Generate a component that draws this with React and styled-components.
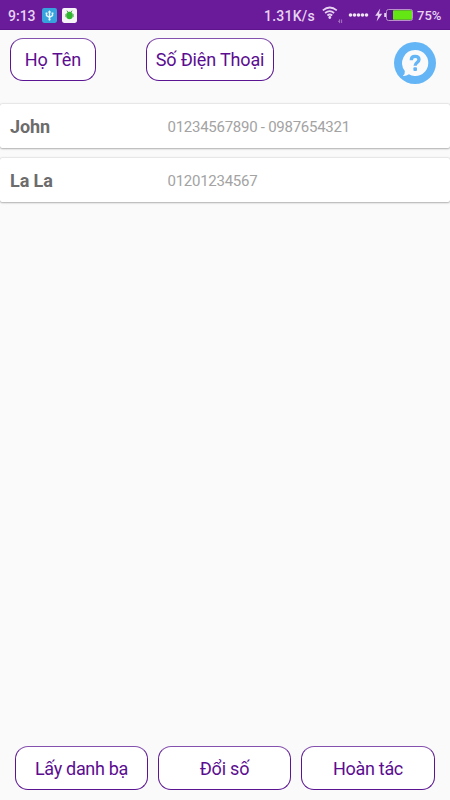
import React from "react";
import styled, { createGlobalStyle } from "styled-components";

const GlobalStyle = createGlobalStyle`
  * { box-sizing: border-box; }
  body {
    margin: 0;
    background: #fafafa;
    font-family: Roboto, "Noto Sans", sans-serif;
  }
`;

const Screen = styled.div`
  width: 450px;
  height: 800px;
  display: flex;
  flex-direction: column;
  background: #fafafa;
  overflow: hidden;
`;

const StatusBar = styled.header`
  height: 30px;
  flex: none;
  display: flex;
  align-items: center;
  padding: 1px 8px 0;
  background: #6a1b9a;
  border-bottom: 1px solid #5d148c;
  color: #e6d3f0;
  font-size: 14px;
  font-weight: 500;
  line-height: 28px;

  svg { flex: none; display: block; }
`;

const Clock = styled.span`
  width: 34px;
  padding-top: 1px;
  white-space: nowrap;
`;

const Notifications = styled.div`
  display: flex;
  gap: 5px;
`;

const Speed = styled.span`
  margin-left: auto;
  margin-right: 7px;
  padding-top: 1px;
  letter-spacing: 0.25px;
`;

const Percent = styled.span`
  width: 25px;
  margin-left: 3px;
  padding-top: 1px;
  font-size: 13px;
  white-space: nowrap;
`;

const Header = styled.nav`
  height: 73px;
  flex: none;
  display: flex;
  align-items: flex-start;
  padding: 8px 14px 0 10px;
`;

const OutlineButton = styled.button`
  width: ${(p) => p.$width}px;
  height: 43px;
  flex: none;
  margin: 0 ${(p) => p.$after || 0}px 0 0;
  padding: 1px 0 0;
  border: 1px solid #5b1593;
  border-top-color: #8452ae;
  border-radius: 13px;
  background: #fff;
  color: #5b0d91;
  font: 400 18px/24px Roboto, "Noto Sans", sans-serif;
  letter-spacing: ${(p) => p.$spacing || 0}px;
  white-space: nowrap;
`;

const ActionButton = styled(OutlineButton)`
  height: 44px;
  padding-top: 2px;
`;

const HelpButton = styled.button`
  width: 42px;
  height: 42px;
  margin: 4px 0 0 auto;
  padding: 0;
  border: 0;
  background: none;

  svg { display: block; }
`;

const ContactList = styled.main`
  flex: 1;
  display: flex;
  flex-direction: column;
  gap: 10px;
  padding-top: 1px;
`;

const ContactCard = styled.article`
  height: 44px;
  display: grid;
  grid-template-columns: 157.5px 1fr;
  align-items: center;
  padding: 1px 10px 0;
  border-radius: 2px;
  background: #fff;
  box-shadow: 0 1px 2px rgba(0, 0, 0, 0.24), 0 0 2px rgba(0, 0, 0, 0.24);
`;

const Name = styled.strong`
  color: #6c6c6c;
  font-size: 18px;
  font-weight: 700;
  line-height: 24px;
  letter-spacing: -0.1px;
`;

const Phone = styled.span`
  color: #a3a3a3;
  font-size: 15px;
  line-height: 20px;
  letter-spacing: -0.26px;
  padding-top: 1px;
`;

const Actions = styled.footer`
  flex: none;
  display: flex;
  gap: 10px;
  padding: 0 15px 10px;
`;

const contacts = [
  { name: "John", phone: "01234567890 - 0987654321" },
  { name: "La La", phone: "01201234567" },
];

const UsbIcon = () => (
  <svg width="15" height="15" viewBox="0 0 14 14">
    <rect width="14" height="14" rx="2" fill="#37a3dc" />
    <path d="M7 3v8M4.2 5v2.1L7 8.8l2.8-1.7V5" fill="none" stroke="#e8f7ff" strokeWidth="1.3" />
    <path d="M5.4 4.2 7 2.2l1.6 2zM3.4 4.2h1.6v1.5H3.4zM9 4.2h1.6v1.5H9z" fill="#e8f7ff" />
    <circle cx="7" cy="10.8" r="1" fill="#e8f7ff" />
  </svg>
);

const BugIcon = () => (
  <svg width="15" height="15" viewBox="0 0 14 14">
    <rect width="14" height="14" rx="2" fill="#f7f4f8" />
    <path d="m4.6 2.5 1 1.6h2.8l1-1.6" fill="none" stroke="#52914d" strokeWidth=".9" />
    <ellipse cx="7" cy="7" rx="3.1" ry="3.5" fill="#2eb62c" />
    <path d="M3.5 5.5v3M10.5 5.5v3" stroke="#709b6d" strokeWidth=".8" />
  </svg>
);

const WifiIcon = () => (
  <svg width="26" height="20" viewBox="0 0 26 20">
    <g fill="none" stroke="#e6d3f0" strokeWidth="1.7">
      <path d="M.8 5.3q7-5.6 14 0M3.1 8q4.7-3.8 9 0M5.4 10.5q2.4-2 4.8 0" />
    </g>
    <circle cx="7.8" cy="12.5" r="1.4" fill="#e6d3f0" />
    <path d="M16 16.3h2M17.6 14.3v3.8M19.6 14.5v3.5" fill="none" stroke="#a674c1" strokeWidth="1" />
  </svg>
);

const SignalDots = () => (
  <svg width="26" height="6" viewBox="0 0 26 6">
    <g fill="#f0e4f6">
      {[2, 6, 10, 14, 18].map((x) => (
        <circle key={x} cx={x + 0.5} cy="3" r="1.8" />
      ))}
    </g>
  </svg>
);

const BatteryIcon = () => (
  <svg width="40" height="16" viewBox="0 0 40 16">
    <path d="M6.2 1.5 1.2 8.8h2.9L2.6 14.5l5.6-7.7H5z" fill="#e6d3f0" />
    <rect x="10.2" y="6" width="1.9" height="4" rx=".5" fill="#e6d3f0" />
    <rect x="12.5" y="2.5" width="26" height="11" rx="2" fill="#5b168b" stroke="#ba91cd" />
    <rect x="19" y="3.2" width="19" height="9.6" rx=".8" fill="#64e514" />
  </svg>
);

const HelpIcon = () => (
  <svg width="42" height="42" viewBox="0 0 42 42">
    <circle cx="21" cy="21" r="21" fill="#64b5f6" />
    <path
      d="M21.3 8a13 13 0 1 1-6.4 24.3Q12 34.4 8.8 34q2.5-2.3 2-5.1A13 13 0 0 1 21.3 8Z"
      fill="#fafafa"
    />
    <path
      d="M17.3 18.2c0-2.8 1.5-3.8 3.7-3.8 2.4 0 4 1.2 4 3.1 0 3-3.9 2.9-3.9 6.2"
      fill="none"
      stroke="#64b5f6"
      strokeWidth="3.3"
    />
    <rect x="19.4" y="25.3" width="3.6" height="3.6" rx="1" fill="#64b5f6" />
  </svg>
);

export default function App() {
  return (
    <>
      <GlobalStyle />
      <Screen>
        <StatusBar>
          <Clock>9:13</Clock>
          <Notifications>
            <UsbIcon />
            <BugIcon />
          </Notifications>
          <Speed>1.31K/s</Speed>
          <WifiIcon />
          <SignalDots />
          <BatteryIcon />
          <Percent>75%</Percent>
        </StatusBar>
        <Header>
          <OutlineButton $width={86} $after={50}>Họ Tên</OutlineButton>
          <OutlineButton $width={128} $spacing={-0.15}>Số Điện Thoại</OutlineButton>
          <HelpButton aria-label="Help">
            <HelpIcon />
          </HelpButton>
        </Header>
        <ContactList>
          {contacts.map((contact) => (
            <ContactCard key={contact.name}>
              <Name>{contact.name}</Name>
              <Phone>{contact.phone}</Phone>
            </ContactCard>
          ))}
        </ContactList>
        <Actions>
          <ActionButton $width={133} $spacing={-0.3}>Lấy danh bạ</ActionButton>
          <ActionButton $width={133} $spacing={-0.2}>Đổi số</ActionButton>
          <ActionButton $width={134} $spacing={-0.3}>Hoàn tác</ActionButton>
        </Actions>
      </Screen>
    </>
  );
}
